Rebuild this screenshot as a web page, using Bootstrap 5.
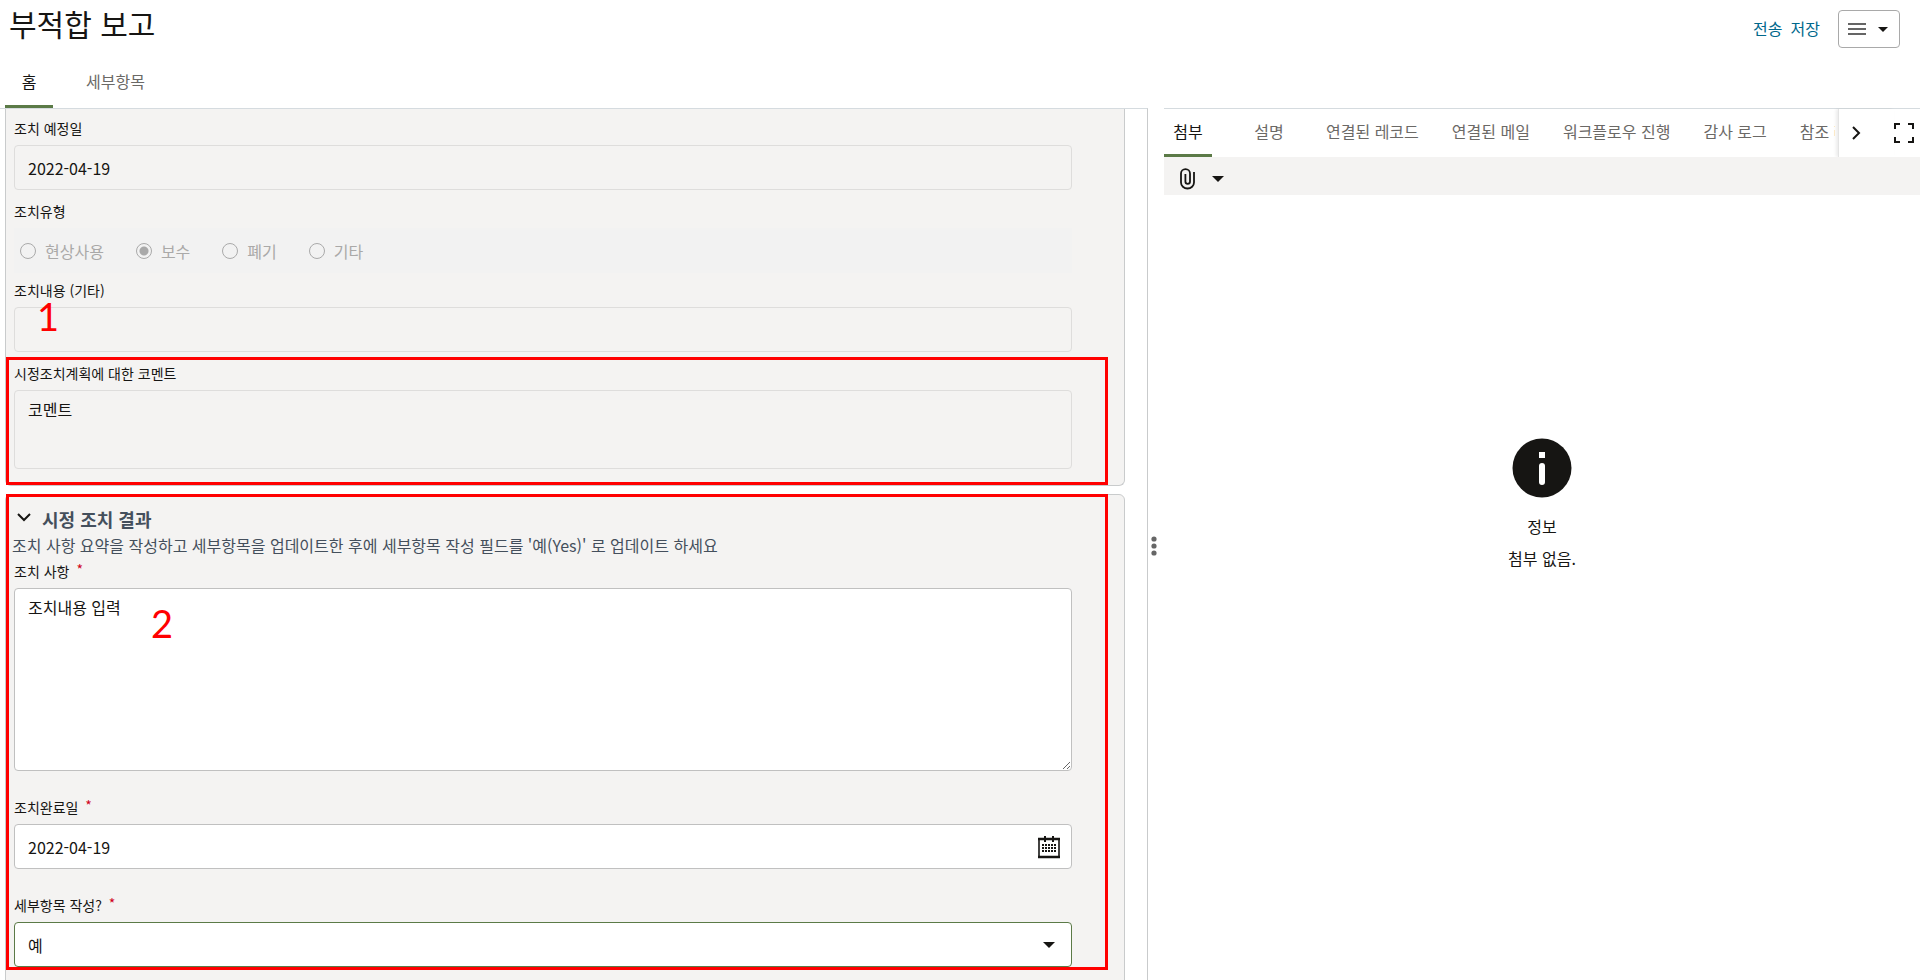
<!DOCTYPE html>
<html lang="ko">
<head>
<meta charset="utf-8">
<meta name="viewport" content="width=device-width, initial-scale=1">
<title>부적합 보고</title>
<link href="https://cdn.jsdelivr.net/npm/bootstrap@5.3.0/dist/css/bootstrap.min.css" rel="stylesheet">
<style>
  :root { --ink: #161513; --soft: #6b6966; --panel: #f4f3f2; --line: #c9cbcc; --accent: #5b7a47; --callout: #ff0000; }
  body { font-family: "Noto Sans CJK KR", sans-serif; font-size: 16px; line-height: 24px; color: var(--ink); }
  svg { display: block; }
  .page-head { height: 60px; padding: 0 20px 0 9px; }
  .page-title { font-size: 30px; line-height: 46px; font-weight: 400; }
  .head-actions { padding-top: 10px; gap: 18px; }
  .action-link { color: #00688c; text-decoration: none; line-height: 36px; }
  .menu-btn { height: 38px; padding: 0 11px 0 9px; gap: 12px; border: 1px solid #a9a9a9; border-radius: 4px; background: #fff; }

  .tab-strip { gap: 33px; }
  .tab-strip .nav-link { min-width: 48px; height: 48px; padding: 0; border: 0; border-bottom: 3px solid transparent; border-radius: 0; background: none; color: var(--soft); white-space: nowrap; }
  .tab-strip .nav-link.active { color: var(--ink); border-bottom-color: var(--accent); }
  .main-tabs { padding-left: 5px; }
  .main-tabs .nav-link { padding-bottom: 3px; }

  .workspace { display: grid; grid-template-columns: minmax(0, 1148fr) 16px minmax(0, 756fr); }
  .form-pane { border-top: 1px solid #d5dbdf; border-right: 1px solid var(--line); padding: 0 22px 0 5px; overflow-y: auto; scrollbar-width: none; }
  .form-pane::-webkit-scrollbar { display: none; }
  .section-panel { background: var(--panel); border: 1px solid var(--line); border-radius: 6px; padding: 0 52px 16px 8px; }
  .section-first { border-top: 0; border-top-left-radius: 0; border-top-right-radius: 0; margin-top: -2px; }
  .section-result { margin-top: 8px; padding-top: 10px; padding-bottom: 40px; }
  .section-title { font-size: 18px; line-height: 28px; font-weight: 700; color: #444f5c; }
  .collapse-btn { padding: 0 2px; border: 0; background: none; }
  .section-note { color: #444f5c; margin-left: -2px; }

  .field-label { display: block; font-size: 14px; line-height: 20px; padding: 11px 0 7px; margin: 0; }
  .field-label-tight { padding-top: 7px; }
  .section-note + .field-label { padding-top: 4px; }
  .field-gap { margin-top: 15px; }
  .req { color: #d0021b; margin-left: 3px; vertical-align: 2px; line-height: 1; }
  .field-box { height: 45px; padding: 1px 13px 0; border: 1px solid #c0c0c0; border-radius: 4px; font-size: 16px; line-height: 24px; color: var(--ink); background: #fff; }
  .field-box:disabled, .field-box[readonly] { background: var(--panel); border-color: #dedddc; color: var(--ink); opacity: 1; }
  textarea.field-box { padding-top: 6px; display: block; }
  .comment-box { height: 79px; resize: none; }
  .action-box { height: 183px; resize: vertical; }
  select.field-box, select.field-box:focus { padding-top: 0; border-color: var(--accent); background-image: none; box-shadow: none; }
  .field-icon { right: 11px; }
  .caret-icon { right: 17px; pointer-events: none; }
  .radio-row { height: 45px; padding-left: 6px; gap: 32px; background: #f2f2f2; color: #aaa9a8; }
  .radio-row .form-check { gap: 9px; }
  .radio-row .form-check-input { width: 16px; height: 16px; border: 1px solid #aaa; background: none; }
  .radio-row .form-check-input:checked { background: radial-gradient(circle, #a9a9a9 0 4px, transparent 5px); }
  .radio-row .form-check-input:disabled, .radio-row .form-check-input:disabled ~ label { opacity: 1; }

  .callout-frame { border: 3px solid var(--callout); pointer-events: none; }
  .frame-comment { inset: 5px -36px -16px -8px; }
  .frame-result { inset: -1px 16px auto 0; height: 476px; }
  .callout-num { font-family: Lato, sans-serif; font-size: 38px; line-height: 28px; color: var(--callout); pointer-events: none; }
  .num-one { left: 23px; bottom: 22px; }
  .num-two { left: 137px; top: 21px; }

  .plain-btn { border: 0; background: none; padding: 0; }
  .side-head { border-top: 1px solid #d5dbdf; }
  .side-head .nav-link { padding-bottom: 1px; }
  .tab-window { min-width: 0; margin-right: 3px; }
  .tab-scroll { border-left: 1px solid #e4e4e4; box-shadow: -2px 0 3px rgba(0,0,0,.08); padding: 0 33px 0 12px; }
  .expand-btn { padding: 0 6px 0 0; }
  .side-bar { height: 38px; background: var(--panel); padding: 6px 0 0 15px; gap: 16px; }
  .empty-state { padding-top: 243px; }
  .empty-state p { margin: 0; }
</style>
</head>
<body class="vh-100 d-flex flex-column overflow-hidden bg-white">
  <header>
    <div class="page-head d-flex justify-content-between">
      <h1 class="page-title m-0">부적합 보고</h1>
      <div class="head-actions d-flex align-items-start">
        <div class="d-flex gap-2">
          <a class="action-link" href="#">전송</a>
          <a class="action-link" href="#">저장</a>
        </div>
        <button class="menu-btn d-flex align-items-center" type="button" aria-label="메뉴">
          <svg width="18" height="14" viewBox="0 0 18 14" stroke="#333" stroke-width="1.700"><path d="M0 2h18M0 7h18M0 12h18"/></svg>
          <svg width="10" height="5" viewBox="0 0 10 5"><path d="M0 0h10L5 5z" fill="#161513"/></svg>
        </button>
      </div>
    </div>
    <ul class="nav tab-strip main-tabs" role="tablist">
      <li class="nav-item"><button class="nav-link active" type="button" role="tab">홈</button></li>
      <li class="nav-item"><button class="nav-link" type="button" role="tab">세부항목</button></li>
    </ul>
  </header>

  <main class="workspace flex-grow-1 overflow-hidden">
    <form class="form-pane">
      <section class="section-panel section-first">
        <label class="field-label" for="planDate">조치 예정일</label>
        <input class="form-control field-box" id="planDate" type="text" value="2022-04-19" readonly>

        <div class="field-label" id="typeLabel">조치유형</div>
        <div class="radio-row d-flex align-items-center" role="radiogroup" aria-labelledby="typeLabel">
          <div class="form-check d-flex align-items-center p-0 m-0"><input class="form-check-input m-0 float-none" type="radio" name="type" id="t1" disabled><label for="t1">현상사용</label></div>
          <div class="form-check d-flex align-items-center p-0 m-0"><input class="form-check-input m-0 float-none" type="radio" name="type" id="t2" checked disabled><label for="t2">보수</label></div>
          <div class="form-check d-flex align-items-center p-0 m-0"><input class="form-check-input m-0 float-none" type="radio" name="type" id="t3" disabled><label for="t3">폐기</label></div>
          <div class="form-check d-flex align-items-center p-0 m-0"><input class="form-check-input m-0 float-none" type="radio" name="type" id="t4" disabled><label for="t4">기타</label></div>
        </div>

        <div class="position-relative">
          <label class="field-label field-label-tight" for="etc">조치내용 (기타)</label>
          <input class="form-control field-box" id="etc" type="text" readonly>
          <span class="callout-num num-one position-absolute">1</span>
        </div>

        <div class="position-relative">
          <label class="field-label" for="comment">시정조치계획에 대한 코멘트</label>
          <textarea class="form-control field-box comment-box" id="comment" readonly>코멘트</textarea>
          <div class="callout-frame frame-comment position-absolute"></div>
        </div>
      </section>

      <section class="section-panel section-result position-relative">
        <div class="d-flex align-items-center gap-2">
          <button class="collapse-btn" type="button" aria-label="접기">
            <svg width="16" height="16" viewBox="0 0 16 16" fill="none" stroke="#161513" stroke-width="2"><path d="M2 3l6 6 6-6"/></svg>
          </button>
          <h2 class="section-title m-0">시정 조치 결과</h2>
        </div>
        <p class="section-note mb-0">조치 사항 요약을 작성하고 세부항목을 업데이트한 후에 세부항목 작성 필드를 '예(Yes)' 로 업데이트 하세요</p>

        <label class="field-label" for="action">조치 사항 <span class="req">*</span></label>
        <div class="position-relative">
          <textarea class="form-control field-box action-box" id="action">조치내용 입력</textarea>
          <span class="callout-num num-two position-absolute">2</span>
        </div>

        <label class="field-label field-gap" for="doneDate">조치완료일 <span class="req">*</span></label>
        <div class="position-relative d-flex align-items-center">
          <input class="form-control field-box" id="doneDate" type="text" value="2022-04-19">
          <button class="plain-btn field-icon position-absolute" type="button" aria-label="날짜 선택">
            <svg width="24" height="24" viewBox="0 0 24 24" fill="none" stroke="#161513"><path d="M2 3v19h20V3" stroke-width="1.6"/><path d="M1 4h22M1 22h22" stroke-width="2.4"/><path d="M8 1v6M16 1v6" stroke-width="2"/><path d="M5 10h15M5 13h15M5 16h15" stroke-width="2" stroke-dasharray="2 1"/></svg>
          </button>
        </div>

        <label class="field-label field-gap" for="detail">세부항목 작성? <span class="req">*</span></label>
        <div class="position-relative d-flex align-items-center">
          <select class="form-select field-box" id="detail"><option>예</option><option>아니요</option></select>
          <svg class="caret-icon position-absolute" width="12" height="6" viewBox="0 0 12 6"><path d="M0 0h12L6 6z" fill="#161513"/></svg>
        </div>
        <div class="callout-frame frame-result position-absolute"></div>
      </section>
    </form>

    <div class="d-flex align-items-center justify-content-center pe-1 pt-1" role="separator">
      <svg width="6" height="20" viewBox="0 0 6 20" fill="#666"><circle cx="3" cy="3" r="2.6"/><circle cx="3" cy="10" r="2.6"/><circle cx="3" cy="17" r="2.6"/></svg>
    </div>

    <aside class="d-flex flex-column overflow-hidden">
      <div class="side-head d-flex">
        <div class="tab-window flex-grow-1 overflow-hidden">
          <ul class="nav tab-strip flex-nowrap" role="tablist">
            <li class="nav-item"><button class="nav-link active" type="button" role="tab">첨부</button></li>
            <li class="nav-item"><button class="nav-link" type="button" role="tab">설명</button></li>
            <li class="nav-item"><button class="nav-link" type="button" role="tab">연결된 레코드</button></li>
            <li class="nav-item"><button class="nav-link" type="button" role="tab">연결된 메일</button></li>
            <li class="nav-item"><button class="nav-link" type="button" role="tab">워크플로우 진행</button></li>
            <li class="nav-item"><button class="nav-link" type="button" role="tab">감사 로그</button></li>
            <li class="nav-item"><button class="nav-link" type="button" role="tab">참조 레코드</button></li>
          </ul>
        </div>
        <button class="plain-btn tab-scroll" type="button" aria-label="다음 탭">
          <svg width="10" height="16" viewBox="0 0 10 16" fill="none" stroke="#161513" stroke-width="2"><path d="M2 2l6 6-6 6"/></svg>
        </button>
        <button class="plain-btn expand-btn" type="button" aria-label="전체 화면">
          <svg width="20" height="20" viewBox="0 0 20 20" fill="none" stroke="#161513" stroke-width="2"><path d="M1 6V1h5M14 1h5v5M19 14v5h-5M6 19H1v-5"/></svg>
        </button>
      </div>
      <div class="side-bar d-flex align-items-center">
        <button class="plain-btn d-flex align-items-center" type="button" aria-label="첨부 추가">
          <svg width="17" height="22" viewBox="0 0 17 22" fill="none" stroke="#161513" stroke-width="1.8"><path d="M15 4v10.500a6.500 6 0 0 1-13 0V5.500a4.500 4.300 0 0 1 9 0V13.500a2.300 2.300 0 0 1-4.600 0V6"/></svg>
        </button>
        <button class="plain-btn" type="button" aria-label="첨부 옵션">
          <svg width="12" height="6" viewBox="0 0 12 6"><path d="M0 0h12L6 6z" fill="#161513"/></svg>
        </button>
      </div>
      <div class="empty-state d-flex flex-column align-items-center">
        <svg width="60" height="60" viewBox="0 0 60 60"><circle cx="30" cy="30" r="29.500" fill="#161513"/><rect x="27" y="14" width="6" height="6" fill="#fff"/><rect x="27" y="25" width="6" height="22" rx="3" fill="#fff"/></svg>
        <p class="pt-3">정보</p>
        <p class="pt-2">첨부 없음.</p>
      </div>
    </aside>
  </main>
<script src="https://cdn.jsdelivr.net/npm/bootstrap@5.3.0/dist/js/bootstrap.bundle.min.js"></script>
</body>
</html>
